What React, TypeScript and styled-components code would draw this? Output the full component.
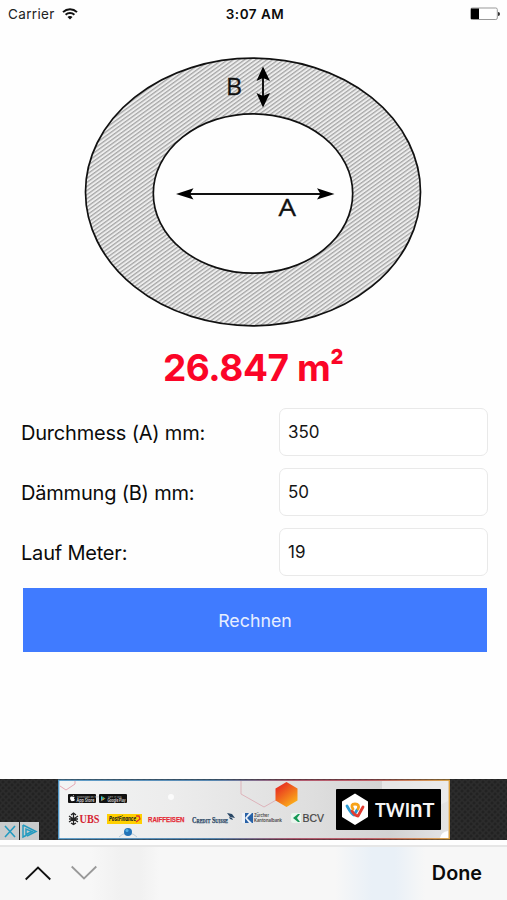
import React, { useState } from "react";
import styled, { createGlobalStyle } from "styled-components";

const GlobalStyle = createGlobalStyle`
  * { box-sizing: border-box; }
  body { margin: 0; background: #fff; font-family: Inter, "Liberation Sans", sans-serif; color: #0b0b0b; }
`;

const Screen = styled.div`
  width: 507px;
  height: 900px;
  display: flex;
  flex-direction: column;
  overflow: hidden;
  background: #fefefe;
`;

const StatusBar = styled.header`
  height: 28px;
  display: grid;
  grid-template-columns: 1fr auto 1fr;
  align-items: center;
  padding: 0 7px 0 8px;
  font-size: 13px;
  line-height: 28px;
`;

const Carrier = styled.div`
  display: flex;
  align-items: center;
  gap: 7px;
  font-size: 13.5px;
  letter-spacing: 0.35px;
  color: #222;
`;

const Clock = styled.div`
  padding-left: 2px;
  font-size: 13.5px;
  font-weight: 600;
  letter-spacing: 0.5px;
`;

const Battery = styled.svg`
  justify-self: end;
`;

const Figure = styled.svg`
  display: block;
  flex: none;
  width: 507px;
  height: 312px;
`;

const Result = styled.div`
  height: 56px;
  display: flex;
  justify-content: center;
  font-size: 37px;
  font-weight: 700;
  line-height: 56px;
  letter-spacing: -0.4px;
  white-space: pre;
  color: #fb0527;
`;

const Square = styled.span`
  transform: scaleX(0.82) translateY(-1px);
  transform-origin: left center;
  margin-right: -3px;
`;

const Form = styled.form`
  display: flex;
  flex-direction: column;
  gap: 12px;
  padding: 12px 19px 0 21px;
`;

const Row = styled.label`
  height: 48px;
  display: grid;
  grid-template-columns: 258px 209px;
  align-items: center;
  font-size: 20px;
  line-height: 24px;
  letter-spacing: -0.2px;
  white-space: nowrap;
`;

const Caption = styled.span`
  padding-top: 2px;
`;

const Field = styled.input`
  width: 209px;
  height: 48px;
  padding: 0 8px;
  border: 1px solid #e9e9e9;
  border-radius: 7px;
  background: #fff;
  font: 17px Inter, sans-serif;
  color: #151515;
  outline: none;
`;

const Submit = styled.button`
  height: 64px;
  margin: 0 1px 0 2px;
  border: 0;
  background: #407bff;
  color: #e6eeff;
  font: 17.8px Inter, sans-serif;
`;

const AdStrip = styled.section`
  position: relative;
  height: 61px;
  margin-top: auto;
  display: flex;
  justify-content: center;
  background-color: #2c2c2c;
  background-image: radial-gradient(circle, #222 1px, transparent 2px), radial-gradient(circle, #222 1px, transparent 2px);
  background-size: 6px 6px;
  background-position: 0 0, 3px 3px;
`;

const Ad = styled.div`
  position: relative;
  width: 392px;
  height: 61px;
  margin-left: 1px;
  display: flex;
  justify-content: space-between;
  padding: 10px 9px 0 10px;
`;

const Backdrop = styled.svg`
  position: absolute;
  inset: 0;
`;

const Partners = styled.div`
  position: relative;
  display: flex;
  flex-direction: column;
  gap: 9px;
  padding-top: 5px;
`;

const LogoRow = styled.div<{ $gap: number }>`
  display: flex;
  gap: ${(p) => p.$gap}px;
`;

const Logo = styled.svg`
  display: block;
  flex: none;
  overflow: visible;
`;

const SmallCaps = styled.text`
  font: small-caps 700 8.5px "Liberation Serif", serif;
  fill: #294765;
  stroke: #294765;
  stroke-width: 0.25px;
`;

const Brand = styled.div`
  position: relative;
  width: 105px;
  height: 41px;
  display: flex;
  align-items: center;
  background: #000;
  border-radius: 1px;
`;

const AdChoices = styled.div`
  position: absolute;
  left: 0;
  bottom: 0;
  display: flex;
  gap: 1px;
`;

const Accessory = styled.footer`
  height: 60px;
  display: flex;
  align-items: center;
  gap: 20px;
  padding: 1px 25px 0;
  border-top: 5px solid #fefefe;
  box-shadow: inset 0 2px #e6e6e6;
  background: linear-gradient(90deg, #f7f7f7 0 90px, #f1f1f1 120px 140px, #f7f7f7 160px 335px, #e9f0f7 372px 395px, #f7f7f7 425px);
`;

const Done = styled.div`
  margin-left: auto;
  font-size: 19.8px;
  font-weight: 600;
`;

const Wifi = () => (
  <svg width="16" height="12" viewBox="0 0 16 12" fill="none" stroke="#111" strokeWidth="2">
    <path d="M1 4.1C5 .3 11 .3 15 4.1M3.6 6.7c2.5-2.3 6.3-2.3 8.8 0" />
    <path d="M8 11.5 5.5 9c1.3-1.2 3.7-1.2 5 0z" fill="#111" stroke="none" />
  </svg>
);

const PipeFigure = () => (
  <Figure viewBox="0 28 507 312">
    <defs>
      <pattern id="hatch" width="40" height="3.3" patternUnits="userSpaceOnUse" patternTransform="rotate(-36)">
        <rect width="40" height="3.3" fill="#ededed" />
        <rect width="40" height="1.3" fill="#a6a6a6" />
      </pattern>
    </defs>
    <ellipse cx="253" cy="192" rx="167.5" ry="133.8" fill="url(#hatch)" stroke="#111" strokeWidth="1.7" />
    <ellipse cx="253" cy="193.5" rx="99.7" ry="79.7" fill="#fefefe" stroke="#111" strokeWidth="1.7" />
    <path d="M188 194H323M263 76V98" stroke="#111" strokeWidth="2" />
    <g fill="#000">
      <path d="M176 194 193.500 188.200 190 194 193.500 199.600Z" />
      <path d="M334.500 194 317 188.200 320.500 194 317 199.600Z" />
      <path d="M263 66.500 256.500 81 263 78 270 81Z" />
      <path d="M263 107.500 256.500 93 263 96 270 93Z" />
    </g>
    <g fill="#111" stroke="#111" strokeWidth=".3" fontFamily='"Open Sans", sans-serif' fontSize="23">
      <text x="226" y="95" textLength="16" lengthAdjust="spacingAndGlyphs">B</text>
      <text x="278.500" y="216" textLength="17.500" lengthAdjust="spacingAndGlyphs">A</text>
    </g>
  </Figure>
);

const AdBackdrop = () => (
  <Backdrop width="392" height="61" viewBox="0 0 392 61">
    <defs>
      <linearGradient id="paper">
        <stop offset="0" stopColor="#f3f4f4" />
        <stop offset=".3" stopColor="#ececec" />
        <stop offset=".65" stopColor="#dedede" />
        <stop offset=".85" stopColor="#d2d2d2" />
        <stop offset="1" stopColor="#e4e4e4" />
      </linearGradient>
      <linearGradient id="frame" gradientUnits="userSpaceOnUse" x1="0" x2="392" y1="0" y2="0">
        <stop offset="0" stopColor="#4f99cb" />
        <stop offset=".4" stopColor="#477eae" />
        <stop offset=".6" stopColor="#ae4b65" />
        <stop offset=".8" stopColor="#c6535c" />
        <stop offset="1" stopColor="#e0a33c" />
      </linearGradient>
      <linearGradient id="ember" x2=".7" y2="1">
        <stop offset=".2" stopColor="#e83421" />
        <stop offset="1" stopColor="#fcb019" />
      </linearGradient>
    </defs>
    <rect x=".7" y="1.200" width="390.600" height="58.600" fill="url(#paper)" stroke="url(#frame)" strokeWidth="1.300" />
    <path d="M324 2h66v20l-10 5V11h-56z" fill="#eee" opacity=".7" />
    <path d="M382 59q1-6 8-7v7z" fill="#fff" />
    <path d="M17 2v3l-9 6-6-4" fill="none" stroke="#e6a9b5" />
    <path d="M183 2v13l23 13 14-8" fill="none" stroke="#ddb3ba" />
    <path d="m228.500 3 11 6.500v12l-11 6.500-11-6.500v-12z" fill="url(#ember)" />
    <path d="m61 58 4-3h10l4 3" fill="none" stroke="#b9cddb" />
    <circle cx="70" cy="53" r="4" fill="#2374b8" />
    <circle cx="69" cy="51.500" r="1.500" fill="#56b2e6" />
    <circle cx="113" cy="18" r="3" fill="#fbfbfb" />
  </Backdrop>
);

const StoreBadge = ({ top, name, play }: { top: string; name: string; play?: boolean }) => (
  <Logo width="28" height="9">
    <rect width="28" height="9" rx="1" fill="#111" />
    {play ? (
      <g>
        <path d="M2 1.800v5.400l2-2.700z" fill="#35b7ea" />
        <path d="m2 1.800 4.500 2.700H4z" fill="#50c568" />
        <path d="m2 7.200 4.500-2.700H4z" fill="#f3b544" />
      </g>
    ) : (
      <path d="M4.700 2.200Q5 1 6 1q0 1.100-1.300 1.200M4.500 2.700C2 1.900 1.600 4 2.600 6c1 2 1.500.8 2.300.9.800.1 1.300.7 2-1.300-1.200-.7-1-1.800-.2-2.400C5.800 2.300 5 3 4.500 2.700" fill="#fff" />
    )}
    <text x="9" y="3.500" fontSize="2.700" fill="#bbb">{top}</text>
    <text x="8.500" y="7.500" fontSize="4.500" fontWeight="600" fill="#ddd" textLength="18" lengthAdjust="spacingAndGlyphs">{name}</text>
  </Logo>
);

const BankLogos = () => (
  <LogoRow $gap={7}>
    <Logo width="32" height="13">
      <g stroke="#222" strokeWidth="1.300" fill="none">
        <path d="m1 4 9 6M1 10l9-6M5.500 2v10M3 3l2.500-2L8 3M1 7h9M3 11l2.500 1.500L8 11" />
      </g>
      <text x="11.500" y="11" fontFamily="Liberation Serif, serif" fontWeight="700" fontSize="12" fill="#d52533" textLength="20" lengthAdjust="spacingAndGlyphs">UBS</text>
    </Logo>
    <Logo width="35" height="13">
      <rect y="2" width="35" height="10" fill="#ffd000" />
      <text x="2" y="9" fontSize="6" fontStyle="italic" fontWeight="800" fill="#222" textLength="27" lengthAdjust="spacingAndGlyphs">PostFinance</text>
      <path d="M29 4h3l1 3-4 3" fill="none" stroke="#df3427" strokeWidth="1.300" />
    </Logo>
    <Logo width="37" height="13">
      <text x="-1" y="10" fontFamily="Liberation Sans, sans-serif" fontSize="8" fontWeight="800" fill="#e42b36" stroke="#e42b36" strokeWidth=".25" textLength="36.500" lengthAdjust="spacingAndGlyphs">RAIFFEISEN</text>
    </Logo>
    <Logo width="42" height="13">
      <SmallCaps x="-1" y="10.500" textLength="36" lengthAdjust="spacingAndGlyphs">Credit Suisse</SmallCaps>
      <path d="m34 1 5 1 3 4-5-1zM36 5l3 1 1 2-3-1z" fill="#294765" />
    </Logo>
    <Logo width="42" height="13">
      <rect x="1" y="1" width="10" height="10" fill="#2861a6" />
      <path d="M0 1h3v10H0zM10 1 5 6l5 5H7L3 6l4-5z" fill="#eef2f8" />
      <g fontSize="4.800" fontWeight="600" fill="#444">
        <text x="12" y="5.300" textLength="15" lengthAdjust="spacingAndGlyphs">Zürcher</text>
        <text x="12" y="9.800" textLength="28" lengthAdjust="spacingAndGlyphs">Kantonalbank</text>
      </g>
    </Logo>
    <Logo width="34" height="13">
      <path d="M0 3q0-2 2-2h8v10H2q-2 0-2-2z" fill="#eaf5ee" />
      <path d="M7 2 2 6l5 4h2L6 6l3-4z" fill="#149855" />
      <text x="11.500" y="10.300" fontFamily="Liberation Sans, sans-serif" fontSize="10.500" fill="#444" stroke="#444" strokeWidth=".2" textLength="21.500" lengthAdjust="spacingAndGlyphs">BCV</text>
    </Logo>
  </LogoRow>
);

const TwintLogo = () => (
  <Logo width="104" height="41">
    <path d="m19 4.500 13 8v15.500l-13 8-13-8V12.500z" fill="#fff" />
    <g fill="none" strokeWidth="2.800" strokeLinecap="round" strokeLinejoin="round">
      <path d="M11 17q5 9 7 9l3-5" stroke="#2a9bd5" />
      <path d="M16 22q3 5 6 5l5-9" stroke="#e23b31" />
      <path d="M17 20q-3-5 2-5t3 5" stroke="#f7a31a" />
    </g>
    <g fontFamily="Lato, sans-serif" fontWeight="700" fontSize="19" fill="#f5f5f5">
      <text x="39" y="27.500" textLength="35" lengthAdjust="spacingAndGlyphs">TWI</text>
      <text x="74" y="27.500" fontSize="25" textLength="12.500" lengthAdjust="spacingAndGlyphs">n</text>
      <text x="86.500" y="27.500" textLength="12" lengthAdjust="spacingAndGlyphs">T</text>
    </g>
  </Logo>
);

const Chevron = ({ down }: { down?: boolean }) => (
  <svg width="26" height="16" fill="none" stroke={down ? "#999" : "#111"} strokeWidth="1.800">
    <path d={down ? "m.7 1.500 12.300 12 12.300-12" : "m.7 14.500 12.300-12 12.300 12"} />
  </svg>
);

const fields = [
  { label: "Durchmess (A) mm:", value: "350" },
  { label: "Dämmung (B) mm:", value: "50" },
  { label: "Lauf Meter:", value: "19" },
];

export default function App() {
  const [values, setValues] = useState(fields.map((f) => f.value));
  return (
    <Screen>
      <GlobalStyle />
      <StatusBar>
        <Carrier>Carrier<Wifi /></Carrier>
        <Clock>3:07 AM</Clock>
        <Battery width="30" height="14">
          <rect x=".7" y="1" width="26.600" height="11.500" rx="1.500" fill="#fff" stroke="#999" />
          <path d="M1 1.500h8v10.500H1z" fill="#000" />
          <path d="M28 5q2 0 2 2t-2 2z" fill="#333" />
        </Battery>
      </StatusBar>
      <PipeFigure />
      <Result>26.847 m<Square>²</Square></Result>
      <Form onSubmit={(e) => e.preventDefault()}>
        {fields.map((f, i) => (
          <Row key={f.label}>
            <Caption>{f.label}</Caption>
            <Field value={values[i]} onChange={(e) => setValues(values.map((v, j) => (j === i ? e.target.value : v)))} />
          </Row>
        ))}
        <Submit type="submit">Rechnen</Submit>
      </Form>
      <AdStrip>
        <Ad>
          <AdBackdrop />
          <Partners>
            <LogoRow $gap={3}>
              <StoreBadge top="Download on the" name="App Store" />
              <StoreBadge top="GET IT ON" name="Google Play" play />
            </LogoRow>
            <BankLogos />
          </Partners>
          <Brand><TwintLogo /></Brand>
        </Ad>
        <AdChoices>
          <Logo width="19" height="18">
            <rect width="19" height="18" fill="#c9cccd" />
            <path d="m5 4 10 11m0-11L5 15" stroke="#249bc0" strokeWidth="1.600" />
          </Logo>
          <Logo width="19" height="18">
            <rect width="19" height="18" fill="#c9cccd" />
            <path d="M3 3v12l3-1.500V7l6 2.500-6 3M3 3l13 6.500L7 14" fill="none" stroke="#249bc0" strokeWidth="1.500" />
          </Logo>
        </AdChoices>
      </AdStrip>
      <Accessory>
        <Chevron />
        <Chevron down />
        <Done>Done</Done>
      </Accessory>
    </Screen>
  );
}
